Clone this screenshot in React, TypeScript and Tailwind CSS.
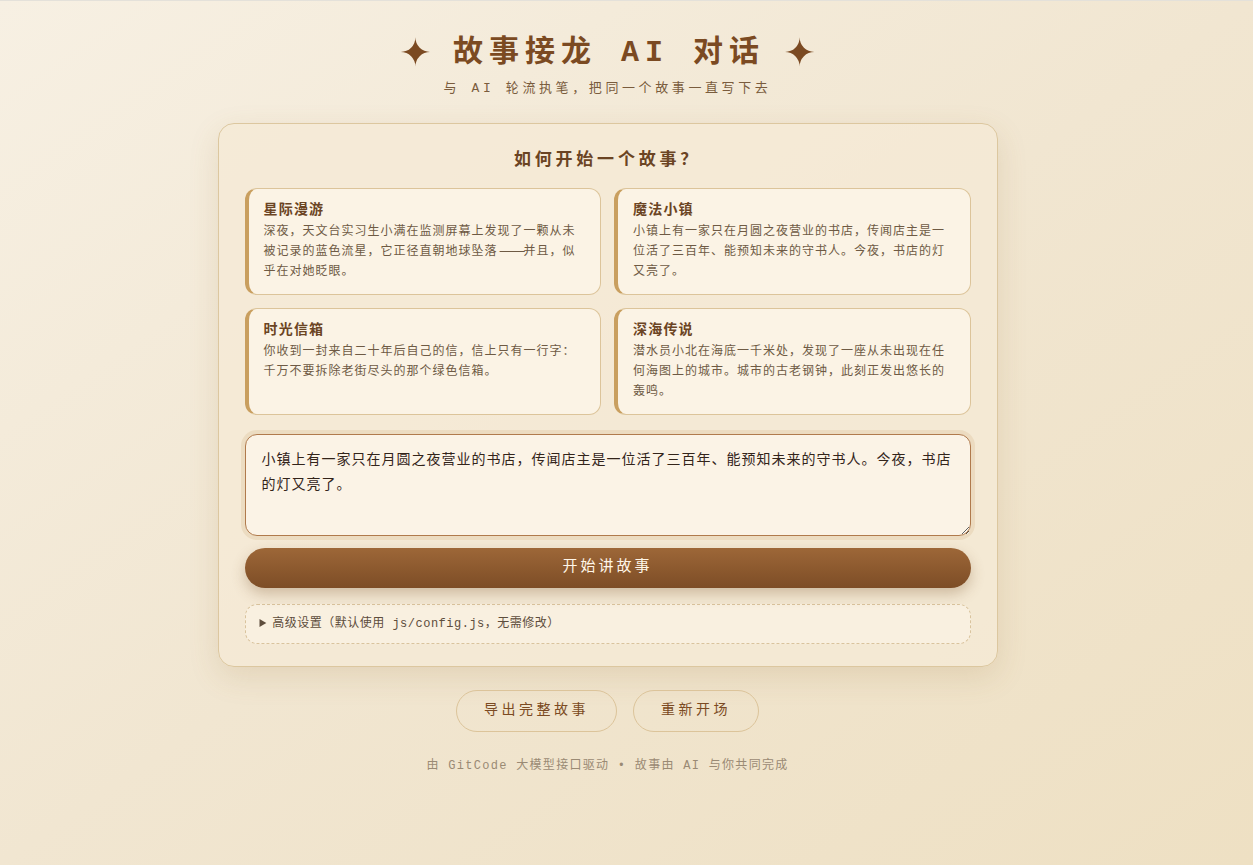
import React, { useState } from 'react';

const FONT = "font-['Liberation_Mono','Noto_Sans_CJK_SC',monospace]";

const starters = [
  {
    title: '星际漫游',
    text: '深夜，天文台实习生小满在监测屏幕上发现了一颗从未被记录的蓝色流星，它正径直朝地球坠落——并且，似乎在对她眨眼。',
  },
  {
    title: '魔法小镇',
    text: '小镇上有一家只在月圆之夜营业的书店，传闻店主是一位活了三百年、能预知未来的守书人。今夜，书店的灯又亮了。',
  },
  {
    title: '时光信箱',
    text: '你收到一封来自二十年后自己的信，信上只有一行字：千万不要拆除老街尽头的那个绿色信箱。',
  },
  {
    title: '深海传说',
    text: '潜水员小北在海底一千米处，发现了一座从未出现在任何海图上的城市。城市的古老钢钟，此刻正发出悠长的轰鸣。',
  },
];

// the mono face has a narrow em dash, so the pair gets a fixed two-cell box and is stretched into it
function withDash(text: string) {
  const parts = text.split('——');
  return parts.map((p, i) => (
    <React.Fragment key={i}>
      {p}
      {i < parts.length - 1 && (
        <span className="inline-block w-[26px] whitespace-nowrap text-center tracking-[-2px]">
          <span className="inline-block scale-x-[2]">——</span>
        </span>
      )}
    </React.Fragment>
  ));
}

function App() {
  const [opening, setOpening] = useState(starters[1].text);

  return (
    <div
      className={`min-h-screen border-t border-[#e4e1da] bg-gradient-to-br from-[#f7f0e3] via-[#f1e6d1] to-[#eee0c3] pr-[38px] ${FONT}`}
    >
      <div className="mx-auto flex w-[780px] flex-col items-center pt-[30px] pb-10">
        {/* Header */}
        <h1 className="flex items-center text-[30px] font-bold leading-[44px] tracking-[0.2em] text-[#7b4a22]">
          <span className="mr-[22px] text-[52px] leading-[44px] tracking-normal">✦</span>
          故事接龙 AI 对话
          <span className="ml-[19px] text-[52px] leading-[44px] tracking-normal">✦</span>
        </h1>
        <p className="mt-[4px] text-[13px] tracking-[3.6px] text-[#7a5c3d]">
          与 AI 轮流执笔，把同一个故事一直写下去
        </p>

        {/* Main card */}
        <div className="mt-[24px] w-full rounded-[16px] border border-[#dcc79f] bg-[#f5ead6]/80 px-[26px] pt-[26px] pb-[22px] shadow-[0_10px_30px_rgba(150,110,50,0.15)]">
          <h2 className="text-center text-[17px] font-bold leading-[22px] tracking-[3.8px] text-[#6b4423]">
            如何开始一个故事？
          </h2>

          <div className="mt-[16px] grid grid-cols-2 gap-[13px]">
            {starters.map((s) => (
              <button
                key={s.title}
                onClick={() => setOpening(s.text)}
                className="flex h-[107px] flex-col items-start justify-start rounded-[12px] border border-l-4 border-[#dcc49a] border-l-[#c99f5f] bg-[#fbf3e5] px-[15px] pt-[11px] text-left"
              >
                <div className="text-[14px] font-bold leading-[20px] tracking-[1.2px] text-[#6b4423]">
                  {s.title}
                </div>
                <p className="mt-[2px] text-[12px] leading-[20px] tracking-[1px] text-[#6e5a44]">
                  {withDash(s.text)}
                </p>
              </button>
            ))}
          </div>

          <textarea
            value={opening}
            onChange={(e) => setOpening(e.target.value)}
            className={`mt-[19px] block h-[102px] w-full resize-y rounded-[12px] border-[1.5px] border-[#b07a4c] bg-[#fbf3e6] px-[16px] pt-[13px] pb-[12px] text-[14px] leading-[25px] tracking-[1px] text-[#33241a] shadow-[0_0_0_4px_rgba(210,180,130,0.25)] outline-none ${FONT}`}
          />

          <button className="mt-[12px] h-[40px] w-full rounded-full bg-gradient-to-b from-[#9d6738] to-[#7d4d26] pt-[2px] text-[15px] tracking-[0.2em] text-[#fff6e8] shadow-[0_6px_14px_rgba(120,80,40,0.3)]">
            开始讲故事
          </button>

          <details className="mt-[16px] rounded-[12px] border border-dashed border-[#d9c39d] bg-[#f9f0e0] px-[14px] py-[11px]">
            <summary className="cursor-pointer text-[12px] leading-[16px] tracking-[0.5px] text-[#5e4d3c]">
              高级设置（默认使用 js/config.js，无需修改）
            </summary>
          </details>
        </div>

        {/* Secondary actions */}
        <div className="mt-[23px] flex gap-[16px]">
          <button className="h-[42px] rounded-full border border-[#dcc49a] px-[27px] text-[14px] tracking-[3.5px] text-[#7b4a22]">
            导出完整故事
          </button>
          <button className="h-[42px] rounded-full border border-[#dcc49a] px-[27px] text-[14px] tracking-[3.5px] text-[#7b4a22]">
            重新开场
          </button>
        </div>

        <footer className="mt-[25px] text-[12px] tracking-[1.3px] text-[#9a8a74]">
          由 GitCode 大模型接口驱动 • 故事由 AI 与你共同完成
        </footer>
      </div>
    </div>
  );
}

export default App;
